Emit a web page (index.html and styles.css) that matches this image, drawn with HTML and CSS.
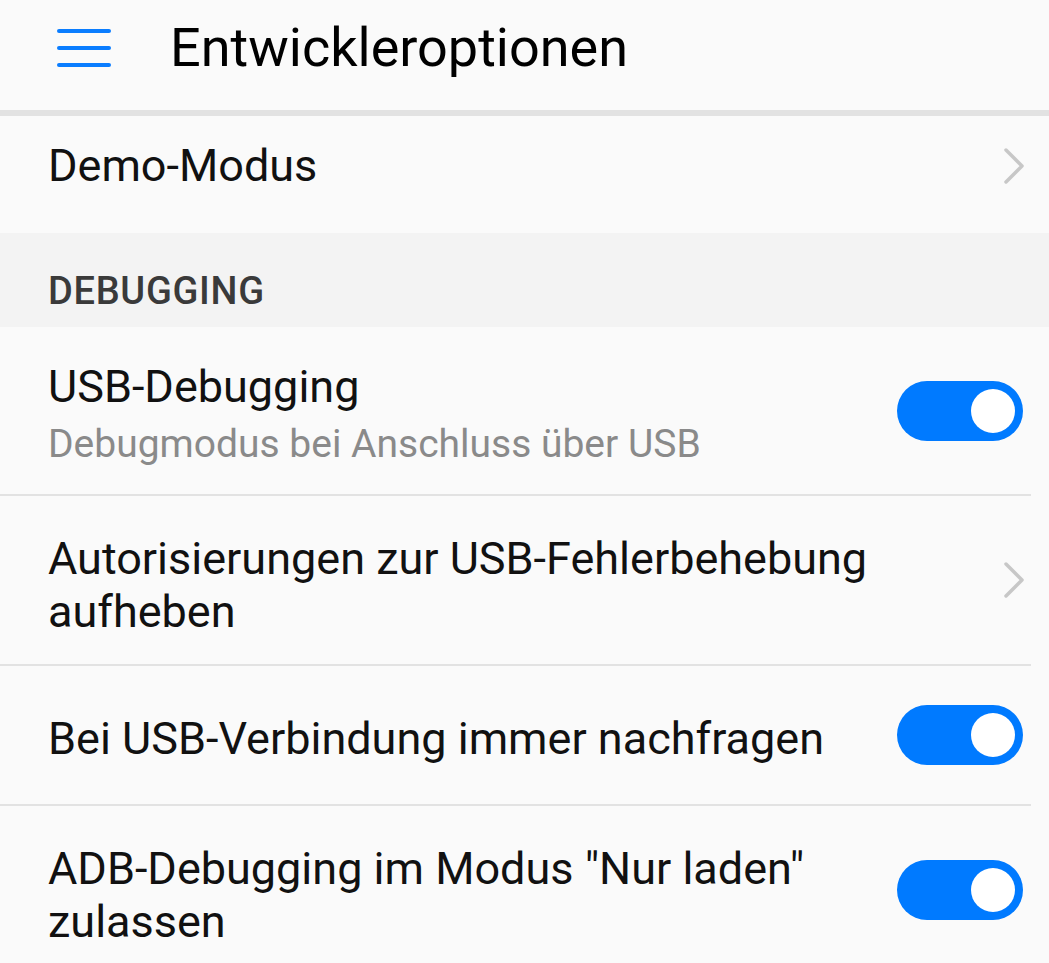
FILE: index.html
```html
<!DOCTYPE html>
<html lang="de">
<head>
  <meta charset="UTF-8" />
  <title>Entwickleroptionen</title>
  <link rel="stylesheet" href="styles.css">
</head>
<body>

  <header class="top-bar">
    <div class="menu-icon">
      <span></span><span></span><span></span>
    </div>
    <h1>Entwickleroptionen</h1>
  </header>

  <div class="row row-demo">
    <div class="row-text">
      <div class="row-title">Demo-Modus</div>
    </div>
    <svg class="chevron" width="26" height="40" viewBox="0 0 26 40">
      <path d="M5 4 L21 20 L5 36" fill="none" stroke="#c7c7c7" stroke-width="3.5" stroke-linecap="round" stroke-linejoin="round"/>
    </svg>
  </div>

  <div class="section-title">DEBUGGING</div>

  <div class="list">
    <div class="row row-sub">
      <div class="row-text">
        <div class="row-title">USB-Debugging</div>
        <div class="row-summary">Debugmodus bei Anschluss über USB</div>
      </div>
      <div class="switch on"><div class="knob"></div></div>
    </div>

    <div class="row row-two">
      <div class="row-text">
        <div class="row-title">Autorisierungen zur USB-Fehlerbehebung<br>aufheben</div>
      </div>
      <svg class="chevron" width="26" height="40" viewBox="0 0 26 40">
        <path d="M5 4 L21 20 L5 36" fill="none" stroke="#c7c7c7" stroke-width="3.5" stroke-linecap="round" stroke-linejoin="round"/>
      </svg>
    </div>

    <div class="row row-one">
      <div class="row-text">
        <div class="row-title">Bei USB-Verbindung immer nachfragen</div>
      </div>
      <div class="switch on"><div class="knob"></div></div>
    </div>

    <div class="row row-two">
      <div class="row-text">
        <div class="row-title">ADB-Debugging im Modus "Nur laden"<br>zulassen</div>
      </div>
      <div class="switch on"><div class="knob"></div></div>
    </div>
  </div>

</body>
</html>
```

FILE: styles.css
```css
body {
  margin: 0;
  background-color: #fafafa;
  font-family: Roboto, "Liberation Sans", sans-serif;
  color: #111;
  width: 1049px;
  overflow: hidden;
}

.top-bar {
  height: 110px;
  display: flex;
  align-items: center;
  padding-left: 57px;
  border-bottom: 6px solid #e2e2e2;
}

.menu-icon {
  width: 54px;
  display: flex;
  flex-direction: column;
  gap: 13px;
  margin-top: -14px;
}

.menu-icon span {
  display: block;
  height: 4px;
  border-radius: 2px;
  background-color: #0a7dff;
}

.top-bar h1 {
  margin: -16px 0 0 59px;
  font-size: 54px;
  font-weight: 400;
  color: #000;
}

.row {
  display: flex;
  align-items: center;
  justify-content: space-between;
  padding: 0 26px 0 48px;
}

.row-demo {
  height: 117px;
  box-sizing: border-box;
  padding-bottom: 18px;
}

.row-title {
  font-size: 45px;
  line-height: 53px;
  color: #111;
}

.row-summary {
  font-size: 39px;
  line-height: 44px;
  color: #8a8a8a;
  margin-top: 9px;
}

.chevron {
  margin-right: -4px;
  flex-shrink: 0;
}

.section-title {
  background-color: #f3f3f3;
  height: 94px;
  box-sizing: border-box;
  padding: 36px 0 0 48px;
  font-size: 38px;
  font-weight: 500;
  color: #3a3a3a;
  letter-spacing: 0.7px;
}

.list .row {
  margin-right: 18px;
  padding-right: 8px;
  border-bottom: 2px solid #e2e2e2;
}

.list .row:last-child {
  border-bottom: none;
}

.row-sub {
  height: 167px;
}

.row-sub .row-text {
  padding-top: 4px;
}

.row-two {
  height: 168px;
}

.row-two .row-text {
  padding-top: 10px;
}

.row-one {
  height: 138px;
}

.row-one .row-text {
  padding-top: 6px;
}

.switch {
  width: 126px;
  height: 60px;
  border-radius: 30px;
  background-color: #007aff;
  display: flex;
  align-items: center;
  justify-content: flex-end;
  padding-right: 8px;
  box-sizing: border-box;
  flex-shrink: 0;
}

.knob {
  width: 44px;
  height: 44px;
  border-radius: 50%;
  background-color: #fff;
}
```
